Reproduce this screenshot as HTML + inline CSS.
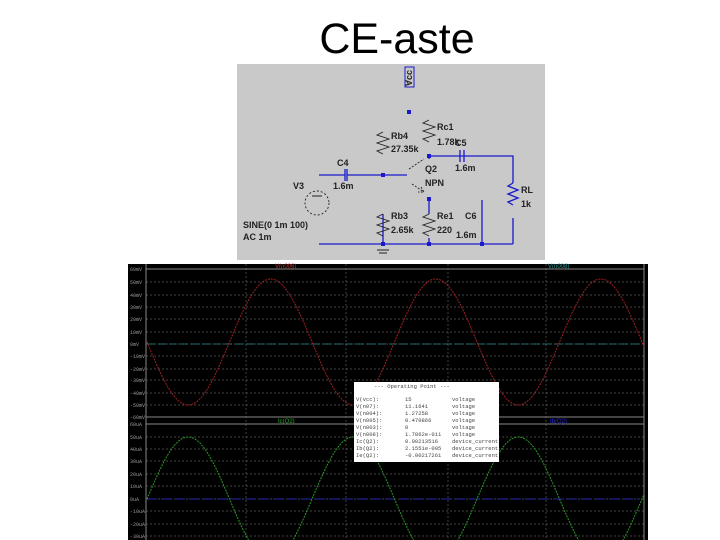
<!DOCTYPE html>
<html><head><meta charset="utf-8"><style>
html,body{margin:0;padding:0;background:#fff;width:720px;height:540px;overflow:hidden}
svg{display:block}
</style></head><body>
<svg id="s" width="720" height="540" xmlns="http://www.w3.org/2000/svg" font-family="Liberation Sans, sans-serif">
<rect width="720" height="540" fill="#fff"/>
<text x="397" y="53" font-size="43" text-anchor="middle" fill="#000">CE-aste</text>
<rect x="237" y="64" width="308" height="196" fill="#c9c9c9"/>
<g stroke="#1a1acc" stroke-width="1.3" fill="none">
<path d="M429 156H513V183M513 218V244M319 244H513M319 175H345M347 175H407M429 156V159M429 199V214M429 238V244M383 175V176M383 214V244M482 200V244M464 156H513"/>
<path d="M460 150V162M464 150V162M345 169V181M347 169V181"/>
<path d="M513 183l-5 3 10 4-10 4 10 4-10 4 5 3"/>
</g>
<g stroke="#222" stroke-width="0.9" fill="none">
<path d="M383 132l-6 3 12 4-12 4 12 4-12 4 6 3"/>
<path d="M429 120l-6 3 12 4-12 4 12 4-12 4 6 3"/>
<path d="M383 214l-6 3 12 4-12 4 12 4-12 4 6 3"/>
<path d="M429 214l-6 3 12 4-12 4 12 4-12 4 6 3"/>
<path d="M409 169L424 159M412 184L424 192M421 187l3 5-6 0" stroke-dasharray="2 1.5"/>
<circle cx="317" cy="203" r="12" stroke-dasharray="2 2"/>
<path d="M312 196h10M377 250h12M379 253h8" />
<path d="M407 82l2 3" />
</g>
<rect x="405" y="67" width="9" height="20" fill="none" stroke="#1a1acc" stroke-width="1"/>
<text transform="translate(412 86) rotate(-90)" font-size="9" font-weight="bold" fill="#222">Vcc</text>
<g fill="#1a1acc">
<rect x="407" y="110" width="4" height="4"/><rect x="427" y="154" width="4" height="4"/><rect x="381" y="173" width="4" height="4"/>
<rect x="427" y="197" width="4" height="4"/><rect x="381" y="242" width="4" height="4"/><rect x="427" y="242" width="4" height="4"/><rect x="480" y="242" width="4" height="4"/>
</g>
<g font-size="9" font-weight="bold" fill="#222">
<text x="391" y="139">Rb4</text><text x="391" y="152">27.35k</text>
<text x="437" y="130">Rc1</text><text x="437" y="145">1.78k</text><text x="455" y="146">C5</text>
<text x="455" y="171">1.6m</text><text x="425" y="172">Q2</text><text x="425" y="186">NPN</text>
<text x="337" y="166">C4</text><text x="333" y="189">1.6m</text><text x="293" y="189">V3</text>
<text x="521" y="193">RL</text><text x="521" y="207">1k</text>
<text x="391" y="219">Rb3</text><text x="391" y="233">2.65k</text>
<text x="437" y="219">Re1</text><text x="437" y="233">220</text>
<text x="465" y="219">C6</text><text x="456" y="238">1.6m</text>
<text x="243" y="228">SINE(0 1m 100)</text><text x="243" y="240">AC 1m</text>
</g>
<rect x="128" y="264" width="520" height="276" fill="#000"/>
<g id="grid" stroke="#5a5a5a" stroke-width="0.7" stroke-dasharray="2 2"></g>
<g stroke="#888" stroke-width="1"><path d="M146 269H644M146 417H644M146 424H644M146 264V540M644 264V540"/></g>
<path d="M147 344H640" stroke="#2a8a8a" stroke-width="0.8" stroke-dasharray="8 3"/>
<path d="M147 499H640" stroke="#2828b0" stroke-width="1" stroke-dasharray="10 4"/>
<path id="red" stroke="#a02020" stroke-width="1" fill="none" stroke-dasharray="2 1"/>
<path id="grn" stroke="#2a9a2a" stroke-width="1" fill="none" stroke-dasharray="2 1"/>
<g id="lab" font-size="5" fill="#999" font-family="Liberation Mono, monospace"></g>
<text x="275" y="268" font-size="6" fill="#c03030">V(n006)</text>
<text x="548" y="268" font-size="6" fill="#2a9a9a">V(n008)</text>
<text x="278" y="423" font-size="6" fill="#2ab02a">Ic(Q2)</text>
<text x="550" y="423" font-size="6" fill="#2a2ae0">Ib(Q2)</text>
<rect x="354" y="382" width="145" height="80" fill="#fff"/>
<g font-family="Liberation Mono, monospace" font-size="5.5" fill="#444">
<text x="374" y="388">--- Operating Point ---</text>
<text x="356" y="401">V(vcc):</text><text x="405" y="401">15</text><text x="452" y="401">voltage</text>
<text x="356" y="408">V(n07):</text><text x="405" y="408">11.1641</text><text x="452" y="408">voltage</text>
<text x="356" y="415">V(n004):</text><text x="405" y="415">1.27258</text><text x="452" y="415">voltage</text>
<text x="356" y="422">V(n005):</text><text x="405" y="422">0.470866</text><text x="452" y="422">voltage</text>
<text x="356" y="429">V(n003):</text><text x="405" y="429">0</text><text x="452" y="429">voltage</text>
<text x="356" y="436">V(n008):</text><text x="405" y="436">1.7862e-011</text><text x="452" y="436">voltage</text>
<text x="356" y="443">Ic(Q2):</text><text x="405" y="443">0.00213516</text><text x="452" y="443">device_current</text>
<text x="356" y="450">Ib(Q2):</text><text x="405" y="450">2.1551e-005</text><text x="452" y="450">device_current</text>
<text x="356" y="457">Ie(Q2):</text><text x="405" y="457">-0.00217261</text><text x="452" y="457">device_current</text>
</g>
<script>
(function(){
var ns="http://www.w3.org/2000/svg",g=document.getElementById('grid'),l=document.getElementById('lab');
var d="";
[282,295,307,319,332,344,356,369,380,393,405,437,449,461,474,486,499,511,524,536].forEach(function(y){d+="M146 "+y+"H644";});
[246,346,448,546].forEach(function(x){d+="M"+x+" 264V540";});
var p=document.createElementNS(ns,'path');p.setAttribute('d',d);g.appendChild(p);
var tl=["60mV","50mV","40mV","30mV","20mV","10mV","0mV","-10mV","-20mV","-30mV","-40mV","-50mV","-60mV"];
[269,282,295,307,319,332,344,356,369,380,393,405,417].forEach(function(y,i){var t=document.createElementNS(ns,'text');t.setAttribute('x',130);t.setAttribute('y',y+2);t.textContent=tl[i];l.appendChild(t);});
var bl=["60uA","50uA","40uA","30uA","20uA","10uA","0uA","-10uA","-20uA","-30uA"];
[424,437,449,461,474,486,499,511,524,536].forEach(function(y,i){var t=document.createElementNS(ns,'text');t.setAttribute('x',130);t.setAttribute('y',y+2);t.textContent=bl[i];l.appendChild(t);});
var r="",q="";
for(var x=147;x<=644;x+=1){var s=Math.sin(2*Math.PI*(x-147)/165);r+=(x==147?"M":"L")+x+" "+(342+63*s).toFixed(1);q+=(x==147?"M":"L")+x+" "+(499-62*s).toFixed(1);}
document.getElementById('red').setAttribute('d',r);document.getElementById('grn').setAttribute('d',q);
})();
</script>
</svg>
</body></html>
